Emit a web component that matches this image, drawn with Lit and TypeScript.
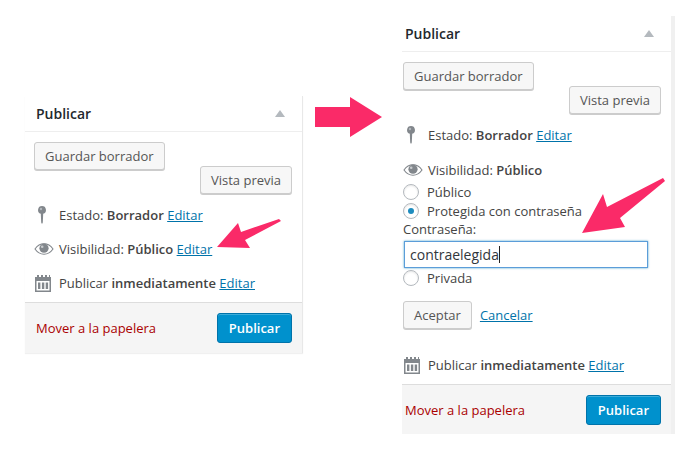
import { LitElement, html, css, svg } from "lit";
import { customElement } from "lit/decorators.js";

const pin = html`<svg class="ico pin" width="12" height="20" viewBox="0 0 12 20"><path fill="#82878c" d="M6 1a4 4 0 0 0-1.200 7.800L5.200 17.500 6 19l.8-1.500.4-8.700A4 4 0 0 0 6 1z"/><circle cx="5" cy="4" r="1.200" fill="#b4b9be"/></svg>`;
const eye = html`<svg class="ico" width="20" height="14" viewBox="0 0 20 14"><path fill="none" stroke="#82878c" stroke-width="1.100" d="M1 7c2.500-3.600 5.500-5.200 9-5.200s6.500 1.600 9 5.200c-2.500 3.600-5.500 5.200-9 5.200S3.500 10.600 1 7z"/><circle cx="10" cy="6.200" r="4.600" fill="#82878c"/><circle cx="8.200" cy="4.800" r="1.300" fill="#c8cbce"/></svg>`;
const cal = html`<svg class="ico" width="18" height="18" viewBox="0 0 18 18"><path fill="#82878c" d="M1 3h2V1h2v2h2V1h2v2h2V1h2v2h2V1h1v2h1v15H1zM2.500 7v9.500h13V7zM4 8.500h2.400V15H4zm3.900 0h2.400V15H7.900zm3.800 0h2.400V15h-2.400z"/></svg>`;

const tri = svg`<path fill="#b4b9be" d="M5 0l5 7H0z"/>`;

@customElement("app-root")
export class AppRoot extends LitElement {
  static styles = css`
    :host {
      display: block;
      position: relative;
      width: 700px;
      height: 450px;
      overflow: hidden;
      background: #fff;
      font-family: "Open Sans", sans-serif;
      font-size: 13px;
      color: #444;
    }
    .stage {
      display: flex;
      align-items: flex-start;
      padding: 16px 0 0 25px;
    }
    .panel {
      box-sizing: border-box;
      width: 278px;
      margin-top: 80px;
      background: #fff;
      border-right: 1px solid #e8e8e8;
      box-shadow: 0 1px 1px rgba(0, 0, 0, 0.06);
      --pad: 9px;
    }
    .panel.right {
      width: 273px;
      margin: 0 0 0 99px;
      border-right: 4px solid #f0f0f0;
      box-shadow: none;
      --pad: 1px;
    }
    .head {
      display: flex;
      align-items: center;
      justify-content: space-between;
      height: 35px;
      padding: 0 17px 0 calc(var(--pad) + 2px);
      border-bottom: 1px solid #eee;
      font-size: 14px;
      font-weight: 600;
      color: #23282d;
    }
    .head svg { display: block; }
    .body { padding: 10px 10px 0 var(--pad); }
    .btn {
      box-sizing: border-box;
      display: inline-block;
      height: 28px;
      padding: 0 10px;
      border: 1px solid #ccc;
      border-radius: 3px;
      background: #f7f7f7;
      box-shadow: 0 1px 0 #ccc;
      color: #555;
      font: inherit;
      line-height: 26px;
    }
    .save { display: flex; }
    .preview { display: flex; justify-content: flex-end; margin-top: -4px; }
    .row {
      display: flex;
      align-items: center;
      height: 20px;
      white-space: pre;
    }
    .ico-box {
      width: 25px;
      display: flex;
      justify-content: flex-start;
      flex: none;
    }
    .ico { display: block; }
    .pin { margin-left: 2px; }
    b { font-weight: 600; }
    a { color: #0073aa; text-decoration: underline; }
    .r1 { margin-top: 11px; }
    .r2 { margin-top: 14px; }
    .r3 { margin-top: 14px; }
    .right .r2 { margin-top: 15px; }
    .opts { display: flex; flex-direction: column; margin-top: 2px; }
    .opt { display: flex; align-items: center; height: 19px; color: #444; }
    .radio {
      box-sizing: border-box;
      width: 16px;
      height: 16px;
      margin-right: 8px;
      border: 1px solid #b4b9be;
      border-radius: 50%;
      background: #fff;
      box-shadow: inset 0 1px 2px rgba(0, 0, 0, 0.1);
      display: flex;
      align-items: center;
      justify-content: center;
      flex: none;
    }
    .radio.on::after {
      content: "";
      width: 6px;
      height: 6px;
      border-radius: 50%;
      background: #1e8cbe;
    }
    .lbl { height: 19px; line-height: 19px; }
    .input {
      box-sizing: border-box;
      width: 244px;
      height: 27px;
      margin: 2px 0 0 1px;
      padding: 0 5px;
      display: flex;
      align-items: center;
      border: 1px solid #5b9dd9;
      box-shadow: 0 0 2px rgba(30, 140, 190, 0.8);
      font-size: 14px;
      color: #32373c;
    }
    .caret { width: 1px; height: 17px; background: #222; }
    .actions { display: flex; align-items: center; gap: 8px; margin-top: 14px; }
    .r3b { margin-top: 26px; }
    .foot {
      display: flex;
      align-items: center;
      justify-content: space-between;
      height: 51px;
      margin-top: 9px;
      padding: 0 10px 0 calc(var(--pad) + 2px);
      background: #f5f5f5;
      border-top: 1px solid #ddd;
      box-sizing: border-box;
    }
    .right .foot { height: 50px; }
    .trash { color: #a00; }
    .pub {
      box-sizing: border-box;
      height: 30px;
      line-height: 28px;
      padding: 0 11px;
      border: 1px solid #0073aa;
      border-radius: 3px;
      background: #0091cd;
      color: #fff;
      font-weight: 600;
      box-shadow: inset 0 1px 0 rgba(120, 200, 230, 0.5);
    }
    .arrow { position: absolute; left: 0; top: 0; pointer-events: none; }
  `;

  private head() {
    return html`<div class="head">Publicar<svg width="10" height="7" viewBox="0 0 10 7">${tri}</svg></div>`;
  }

  private foot() {
    return html`<div class="foot"><span class="trash">Mover a la papelera</span><span class="pub">Publicar</span></div>`;
  }

  render() {
    return html`
      <div class="stage">
        <section class="panel">
          ${this.head()}
          <div class="body">
            <div class="save"><span class="btn">Guardar borrador</span></div>
            <div class="preview"><span class="btn">Vista previa</span></div>
            <div class="row r1"><span class="ico-box">${pin}</span><span>Estado: <b>Borrador</b> <a>Editar</a></span></div>
            <div class="row r2"><span class="ico-box">${eye}</span><span>Visibilidad: <b>Público</b> <a>Editar</a></span></div>
            <div class="row r3"><span class="ico-box">${cal}</span><span>Publicar <b>inmediatamente</b> <a>Editar</a></span></div>
          </div>
          ${this.foot()}
        </section>
        <section class="panel right">
          ${this.head()}
          <div class="body">
            <div class="save"><span class="btn">Guardar borrador</span></div>
            <div class="preview"><span class="btn">Vista previa</span></div>
            <div class="row r1"><span class="ico-box">${pin}</span><span>Estado: <b>Borrador</b> <a>Editar</a></span></div>
            <div class="row r2"><span class="ico-box">${eye}</span><span>Visibilidad: <b>Público</b></span></div>
            <div class="opts">
              <div class="opt"><span class="radio"></span>Público</div>
              <div class="opt"><span class="radio on"></span>Protegida con contraseña</div>
              <div class="lbl">Contraseña:</div>
              <div class="input">contraelegida<span class="caret"></span></div>
              <div class="opt"><span class="radio"></span>Privada</div>
            </div>
            <div class="actions"><span class="btn">Aceptar</span><a>Cancelar</a></div>
            <div class="row r3b"><span class="ico-box">${cal}</span><span>Publicar <b>inmediatamente</b> <a>Editar</a></span></div>
          </div>
          ${this.foot()}
        </section>
      </div>
      <svg class="arrow" width="700" height="450" viewBox="0 0 700 450">
        <path fill="#fa2a68" d="M315 107H350V97L382 117L350 137V127H315z"/>
        <path fill="#fa2a68" d="M279 219L281 221L245 240L250 248L217 247L238 223L241 232z"/>
        <path fill="#fa2a68" d="M663 178L665 181L620 218L625 227L582 233L603 194L607 207z"/>
      </svg>
    `;
  }
}
